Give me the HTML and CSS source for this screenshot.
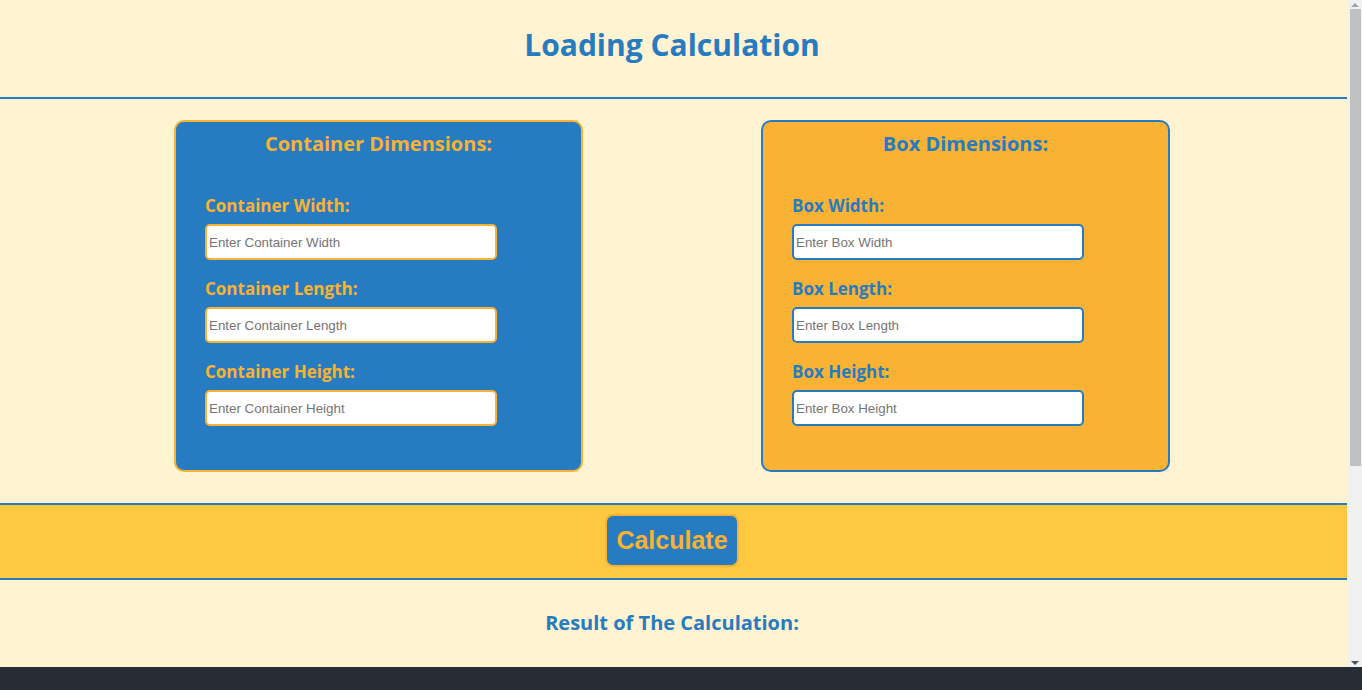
FILE: index.html
```html
<!DOCTYPE html>
<html lang="en">
<head>
<meta charset="utf-8">
<title>Loading Calculation</title>
<link rel="stylesheet" href="styles.css">
</head>
<body>
<div class="page">
  <header class="top">
    <h1 class="title">Loading Calculation</h1>
  </header>
  <section class="cards">
    <div class="card card-container">
      <h3 class="card-title">Container Dimensions:</h3>
      <div class="fields">
        <label class="label">Container Width:</label>
        <input class="field" type="number" placeholder="Enter Container Width">
        <label class="label">Container Length:</label>
        <input class="field" type="number" placeholder="Enter Container Length">
        <label class="label">Container Height:</label>
        <input class="field" type="number" placeholder="Enter Container Height">
      </div>
    </div>
    <div class="card card-box">
      <h3 class="card-title">Box Dimensions:</h3>
      <div class="fields">
        <label class="label">Box Width:</label>
        <input class="field" type="number" placeholder="Enter Box Width">
        <label class="label">Box Length:</label>
        <input class="field" type="number" placeholder="Enter Box Length">
        <label class="label">Box Height:</label>
        <input class="field" type="number" placeholder="Enter Box Height">
      </div>
    </div>
  </section>
  <section class="band">
    <button class="calc" type="button">Calculate</button>
  </section>
  <section class="result">
    <h3 class="result-title">Result of The Calculation:</h3>
  </section>
</div>
<footer class="footer"></footer>
<div class="scrollbar" aria-hidden="true">
  <div class="sb-arrow sb-up"></div>
  <div class="sb-track"><div class="sb-thumb"></div></div>
  <div class="sb-arrow sb-down"></div>
</div>
</body>
</html>
```

FILE: styles.css
```css
* { box-sizing: border-box; }
html, body { margin: 0; padding: 0; }
body {
  background: #fff3d1;
  font-family: "Open Sans", "Liberation Sans", sans-serif;
  overflow: hidden;
}
.page {
  margin-right: 15px;
}
.top {
  border-bottom: 2px solid #277bc0;
  text-align: center;
}
.title {
  margin: 0;
  padding: 24px 3px 31px 0;
  font-size: 30px;
  line-height: 42px;
  font-weight: 700;
  color: #277bc0;
}
.cards {
  display: flex;
  justify-content: flex-start;
  gap: 178px;
  padding: 21px 0 31px 174px;
}
.card {
  width: 409px;
  border: 2px solid;
  border-radius: 10px;
  padding: 8px 29px 44px;
}
.card-container { background: #277bc0; border-color: #f9b233; color: #f9b233; }
.card-box { background: #f9b233; border-color: #277bc0; color: #277bc0; }
.card-title {
  margin: 0;
  text-align: center;
  font-size: 20px;
  line-height: 27px;
  font-weight: 700;
}
.fields {
  display: flex;
  flex-direction: column;
  align-items: flex-start;
  padding-top: 37px;
}
.label {
  font-size: 17px;
  line-height: 23px;
  font-weight: 700;
  margin-bottom: 7px;
}
.field {
  width: 292px;
  height: 36px;
  border: 2px solid;
  border-radius: 5px;
  background: #fff;
  padding: 1px 2px;
  font-family: "Liberation Sans", Arial, sans-serif;
  font-size: 13.33px;
  margin-bottom: 17px;
  outline: none;
}
.field:last-child { margin-bottom: 0; }
.card-container .field { border-color: #f9b233; }
.card-box .field { border-color: #277bc0; }
.field::placeholder { color: #757575; }
.band {
  background: #fec941;
  border-top: 2px solid #277bc0;
  border-bottom: 2px solid #277bc0;
  padding: 9px 3px 11px 0;
  display: flex;
  justify-content: center;
}
.calc {
  width: 134px;
  height: 53px;
  background: #277bc0;
  border: 2px solid #f9b233;
  border-radius: 8px;
  color: #f9b233;
  font-family: "Liberation Sans", Arial, sans-serif;
  font-weight: 700;
  font-size: 25px;
  padding: 0;
}
.result {
  height: 87px;
  padding: 29px 3px 0 0;
  display: flex;
  justify-content: center;
  align-items: flex-start;
}
.result-title {
  margin: 0;
  font-size: 20px;
  line-height: 27px;
  font-weight: 700;
  color: #277bc0;
}
.footer {
  height: 23px;
  background: #282c34;
}
.scrollbar {
  position: fixed;
  top: 0;
  right: 0;
  width: 15px;
  height: 667px;
  background: #f1f1f1;
  display: flex;
  flex-direction: column;
}
.sb-arrow {
  height: 9px;
  flex: none;
  display: flex;
  justify-content: center;
  align-items: center;
}
.sb-up::before {
  content: "";
  border-left: 4px solid transparent;
  border-right: 4px solid transparent;
  border-bottom: 4px solid #a3a3a3;
}
.sb-down::before {
  content: "";
  border-left: 4px solid transparent;
  border-right: 4px solid transparent;
  border-top: 4px solid #505050;
}
.sb-track {
  flex: 1;
  padding: 0 1px 0 3px;
}
.sb-thumb {
  height: 457px;
  background: #c1c1c1;
}
```
